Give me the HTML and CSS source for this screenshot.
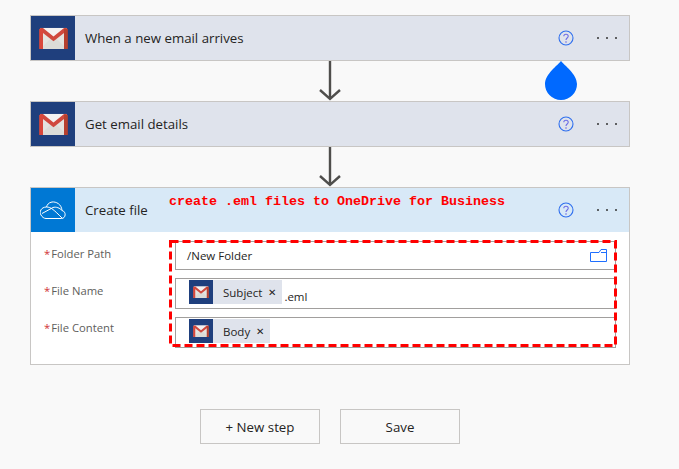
FILE: index.html
```html
<!DOCTYPE html>
<html lang="en">
<head>
  <meta charset="UTF-8">
  <title>Flow</title>
  <link rel="stylesheet" href="styles.css">
</head>
<body>
  <svg class="defs" width="0" height="0">
    <symbol id="gmail" viewBox="0 0 30 23">
      <rect x="1" y="1" width="28" height="22" fill="#e4e4e0"/>
      <path d="M1 1 L15 12 L29 1 Z" fill="#f4f2f2"/>
      <path d="M1 23 L13 11 L15 12 L17 11 L29 23 Z" fill="#dcdcd8"/>
      <path d="M1 1 H4 L15 10 L26 1 H29 V4 L15 15 L1 4 Z" fill="#d0493e"/>
      <path d="M0 2 H4 V23 H0 Z" fill="#d9473b"/>
      <path d="M26 2 H30 V23 H26 Z" fill="#b5402f"/>
    </symbol>
    <symbol id="help" viewBox="0 0 16 16">
      <circle cx="8" cy="8" r="7" fill="none" stroke="#2f6fee" stroke-width="1.1"/>
      <path d="M5.8 6.2 C5.8 3.6 10.2 3.6 10.2 6.2 C10.2 8 8 8 8 10" fill="none" stroke="#6a6ae6" stroke-width="1.1"/>
      <circle cx="8" cy="12" r="0.8" fill="#6a6ae6"/>
    </symbol>
    <symbol id="arrow" viewBox="0 0 24 40">
      <path d="M12 0 V38 M2 29 L12 38 L22 29" fill="none" stroke="#4f4e4c" stroke-width="2.4"/>
    </symbol>
  </svg>

  <main class="flow">
    <section class="step">
      <div class="step-head">
        <div class="step-icon gmail-bg"><svg class="gmail-icon"><use href="#gmail"/></svg></div>
        <span class="step-title">When a new email arrives</span>
        <svg class="help"><use href="#help"/></svg>
        <span class="more"><i></i><i></i><i></i></span>
      </div>
    </section>

    <div class="connector">
      <svg class="arrow"><use href="#arrow"/></svg>
      <svg class="drop" viewBox="0 0 32 39"><path d="M16 0 C19 4 32 13 32 23 A16 16 0 0 1 0 23 C0 13 13 4 16 0 Z" fill="#0069ff"/></svg>
    </div>

    <section class="step">
      <div class="step-head">
        <div class="step-icon gmail-bg"><svg class="gmail-icon"><use href="#gmail"/></svg></div>
        <span class="step-title">Get email details</span>
        <svg class="help"><use href="#help"/></svg>
        <span class="more"><i></i><i></i><i></i></span>
      </div>
    </section>

    <div class="connector">
      <svg class="arrow"><use href="#arrow"/></svg>
    </div>

    <section class="step step-open">
      <div class="step-head head-blue">
        <div class="step-icon drive-bg">
          <svg class="drive-icon" viewBox="0 0 26 18"><path d="M6 17.5 H21.5 C26 17.5 26.5 10.5 22 9.5 C21.5 3 16 .5 12 1 C8.5 1.5 7 4 6.5 6 C1 6 -1 11 1 14 C2 16 4 17.5 6 17.5 Z M2 12.5 L13 6.5 C16 5.5 20 7 22 9.5 M6.5 6 C11 6 14 9 22 17" fill="none" stroke="#fff" stroke-width="1"/></svg>
        </div>
        <span class="step-title">Create file</span>
        <span class="note">create .eml files to OneDrive for Business</span>
        <svg class="help"><use href="#help"/></svg>
        <span class="more"><i></i><i></i><i></i></span>
      </div>
      <div class="form">
        <div class="row">
          <label class="label"><b>*</b>Folder Path</label>
          <div class="field field-path">
            <span>/New Folder</span>
            <svg class="folder" viewBox="0 0 17 13"><path d="M.5 3.5 H9 L11 .5 H16.5 V12.5 H.5 Z M11 3.5 H16.5" fill="none" stroke="#1f6fff"/></svg>
          </div>
        </div>
        <div class="row">
          <label class="label"><b>*</b>File Name</label>
          <div class="field field-tall">
            <span class="token">
              <span class="token-icon"><svg class="token-gmail"><use href="#gmail"/></svg></span>
              <span class="token-name">Subject</span><span class="token-x">&#x2715;</span>
            </span>
            <span class="after-token">.eml</span>
          </div>
        </div>
        <div class="row row-last">
          <label class="label"><b>*</b>File Content</label>
          <div class="field field-tall">
            <span class="token">
              <span class="token-icon"><svg class="token-gmail"><use href="#gmail"/></svg></span>
              <span class="token-name">Body</span><span class="token-x">&#x2715;</span>
            </span>
          </div>
        </div>
        <svg class="highlight" width="449" height="108"><rect x="1.5" y="1.5" width="445" height="104" fill="none" stroke="#ff0000" stroke-width="3" stroke-dasharray="8 4"/></svg>
      </div>
    </section>

    <div class="actions">
      <button class="btn">+ New step</button>
      <button class="btn">Save</button>
    </div>
  </main>
</body>
</html>
```

FILE: styles.css
```css
body {
  margin: 0;
  background-color: #f9f9f9;
  font-family: "Open Sans", Arial, sans-serif;
  color: #252423;
  overflow: hidden;
}

.defs {
  position: absolute;
}

.flow {
  width: 600px;
  margin-left: 30px;
  padding-top: 15px;
}

.step {
  border: 1px solid #c8c6c4;
  box-sizing: border-box;
}

.step-open {
  background-color: #fff;
  height: 178px;
}

.step-head {
  display: flex;
  align-items: center;
  height: 44px;
  background-color: #dfe3ec;
}

.head-blue {
  position: relative;
  background-color: #d8e9f7;
}

.step-icon {
  display: flex;
  align-items: center;
  justify-content: center;
  width: 44px;
  height: 44px;
}

.gmail-bg {
  background-color: #1f3f7d;
}

.drive-bg {
  background-color: #0078d4;
}

.gmail-icon {
  width: 29px;
  height: 22px;
  margin-bottom: 1px;
}

.drive-icon {
  width: 26px;
  height: 18px;
}

.step-title {
  flex: 1;
  margin-left: 10px;
  font-size: 13.25px;
}

.note {
  position: absolute;
  left: 138px;
  top: 6px;
  font-family: "Liberation Mono", monospace;
  font-size: 13.33px;
  font-weight: bold;
  color: #ff0000;
}

.help {
  width: 16px;
  height: 16px;
  margin-right: 23px;
}

.more {
  display: flex;
  gap: 6.5px;
  margin-right: 12px;
}

.more i {
  width: 2.5px;
  height: 2.5px;
  background-color: #333;
  border-radius: 50%;
}

.connector {
  position: relative;
  height: 40px;
  display: flex;
  justify-content: center;
}

.arrow {
  width: 24px;
  height: 40px;
}

.drop {
  position: absolute;
  left: 515px;
  top: 0;
  width: 32px;
  height: 39px;
}

.form {
  position: relative;
  padding: 9px 13px 0 13px;
}

.row {
  display: flex;
  margin-bottom: 8px;
}

.label {
  width: 131px;
  padding-top: 5px;
  font-size: 11.25px;
  color: #605e5c;
}

.row-last .label {
  padding-top: 3px;
}

.label b {
  margin-right: 1px;
  font-weight: normal;
  color: #d13438;
}

.field {
  flex: 1;
  display: flex;
  align-items: center;
  box-sizing: border-box;
  border: 1px solid #a19f9d;
  background-color: #fff;
  font-size: 11.5px;
}

.field-path {
  height: 29px;
  padding: 0 8px 1px 11px;
  justify-content: space-between;
}

.field-tall {
  height: 31px;
  align-items: flex-start;
  padding: 1px 0 0 13px;
}

.folder {
  width: 17px;
  height: 13px;
}

.token {
  display: flex;
  align-items: center;
  height: 24px;
  background-color: #dfe3ec;
}

.token-icon {
  display: flex;
  align-items: center;
  justify-content: center;
  width: 24px;
  height: 24px;
  background-color: #1f3f7d;
}

.token-gmail {
  width: 16px;
  height: 12px;
}

.token-name {
  margin-left: 10px;
}

.token-x {
  margin: 0 6px;
  font-size: 10px;
  line-height: 1;
}

.after-token {
  align-self: flex-end;
  margin-left: 2px;
  margin-bottom: 4px;
}

.highlight {
  position: absolute;
  left: 138px;
  top: 8px;
}

.actions {
  display: flex;
  justify-content: center;
  gap: 20px;
  margin-top: 44px;
}

.btn {
  width: 120px;
  height: 35px;
  border: 1px solid #c8c6c4;
  background-color: #f9f9f9;
  font-family: inherit;
  font-size: 13.3px;
  color: #252423;
}
```
